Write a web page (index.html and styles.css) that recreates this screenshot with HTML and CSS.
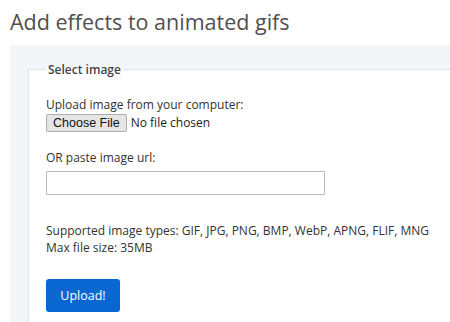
FILE: index.html
```html
<!DOCTYPE html>
<html lang="en">
<head>
  <meta charset="UTF-8" />
  <title>Add effects to animated gifs</title>
  <link rel="stylesheet" href="styles.css">
</head>
<body>

  <h1>Add effects to animated gifs</h1>

  <div class="upload-panel">
    <form class="upload-form">
      <fieldset>
        <legend>Select image</legend>

        <label for="new-image">Upload image from your computer:</label>
        <input type="file" id="new-image" name="new-image" />

        <label for="new-image-url" class="url-label">OR paste image url:</label>
        <input type="text" id="new-image-url" name="new-image-url" />

        <p class="help">
          Supported image types: GIF, JPG, PNG, BMP, WebP, APNG, FLIF, MNG<br>
          Max file size: 35MB
        </p>

        <button type="submit" class="upload-button">Upload!</button>
      </fieldset>
    </form>
  </div>

</body>
</html>
```

FILE: styles.css
```css
/* Base */
body {
  margin: 0;
  padding: 0 0 0 10px;
  font-family: 'Open Sans', 'Noto Sans', sans-serif;
  font-size: 12px;
  color: #333;
  background: #fff;
  overflow: hidden;
}

h1 {
  margin: 6px 0 0;
  font-size: 21.5px;
  font-weight: 400;
  line-height: 32px;
  color: #505050;
  white-space: nowrap;
}

/* Gray panel around the form */
.upload-panel {
  margin-top: 7px;
  width: 480px;
  background: #f4f5f8;
  padding: 16px 0 0 18px;
}

.upload-form fieldset {
  margin: 0;
  padding: 18px 17px 12px;
  border: 1px solid #e2e3e6;
  border-right: none;
  background: #fff;
}

legend {
  padding: 0 2px;
  font-weight: 600;
  color: #444;
  font-size: 12px;
}

label {
  display: block;
  line-height: 17px;
}

input[type="file"] {
  display: block;
  font-family: 'Open Sans', 'Noto Sans', sans-serif;
  font-size: 12px;
  color: #222;
  margin-top: 1px;
}

input[type="file"]::file-selector-button {
  font-family: 'Liberation Sans', Arial, sans-serif;
  font-size: 12.5px;
  padding: 1px 6px;
  margin-right: 4px;
  border: 1px solid #adadad;
  border-radius: 2px;
  background: #e5e5e5;
  color: #111;
}

.url-label {
  margin-top: 17px;
}

input[type="text"] {
  display: block;
  width: 279px;
  height: 24px;
  box-sizing: border-box;
  margin-top: 5px;
  border: 1px solid #b8b8b8;
  border-radius: 1px;
}

.help {
  margin: 27px 0 0;
  line-height: 17px;
  white-space: nowrap;
}

.upload-button {
  display: block;
  margin-top: 23px;
  width: 74px;
  height: 33px;
  border: none;
  border-radius: 3px;
  background: #0a66d1;
  color: #fff;
  font-family: inherit;
  font-size: 12.5px;
  cursor: pointer;
}
```
